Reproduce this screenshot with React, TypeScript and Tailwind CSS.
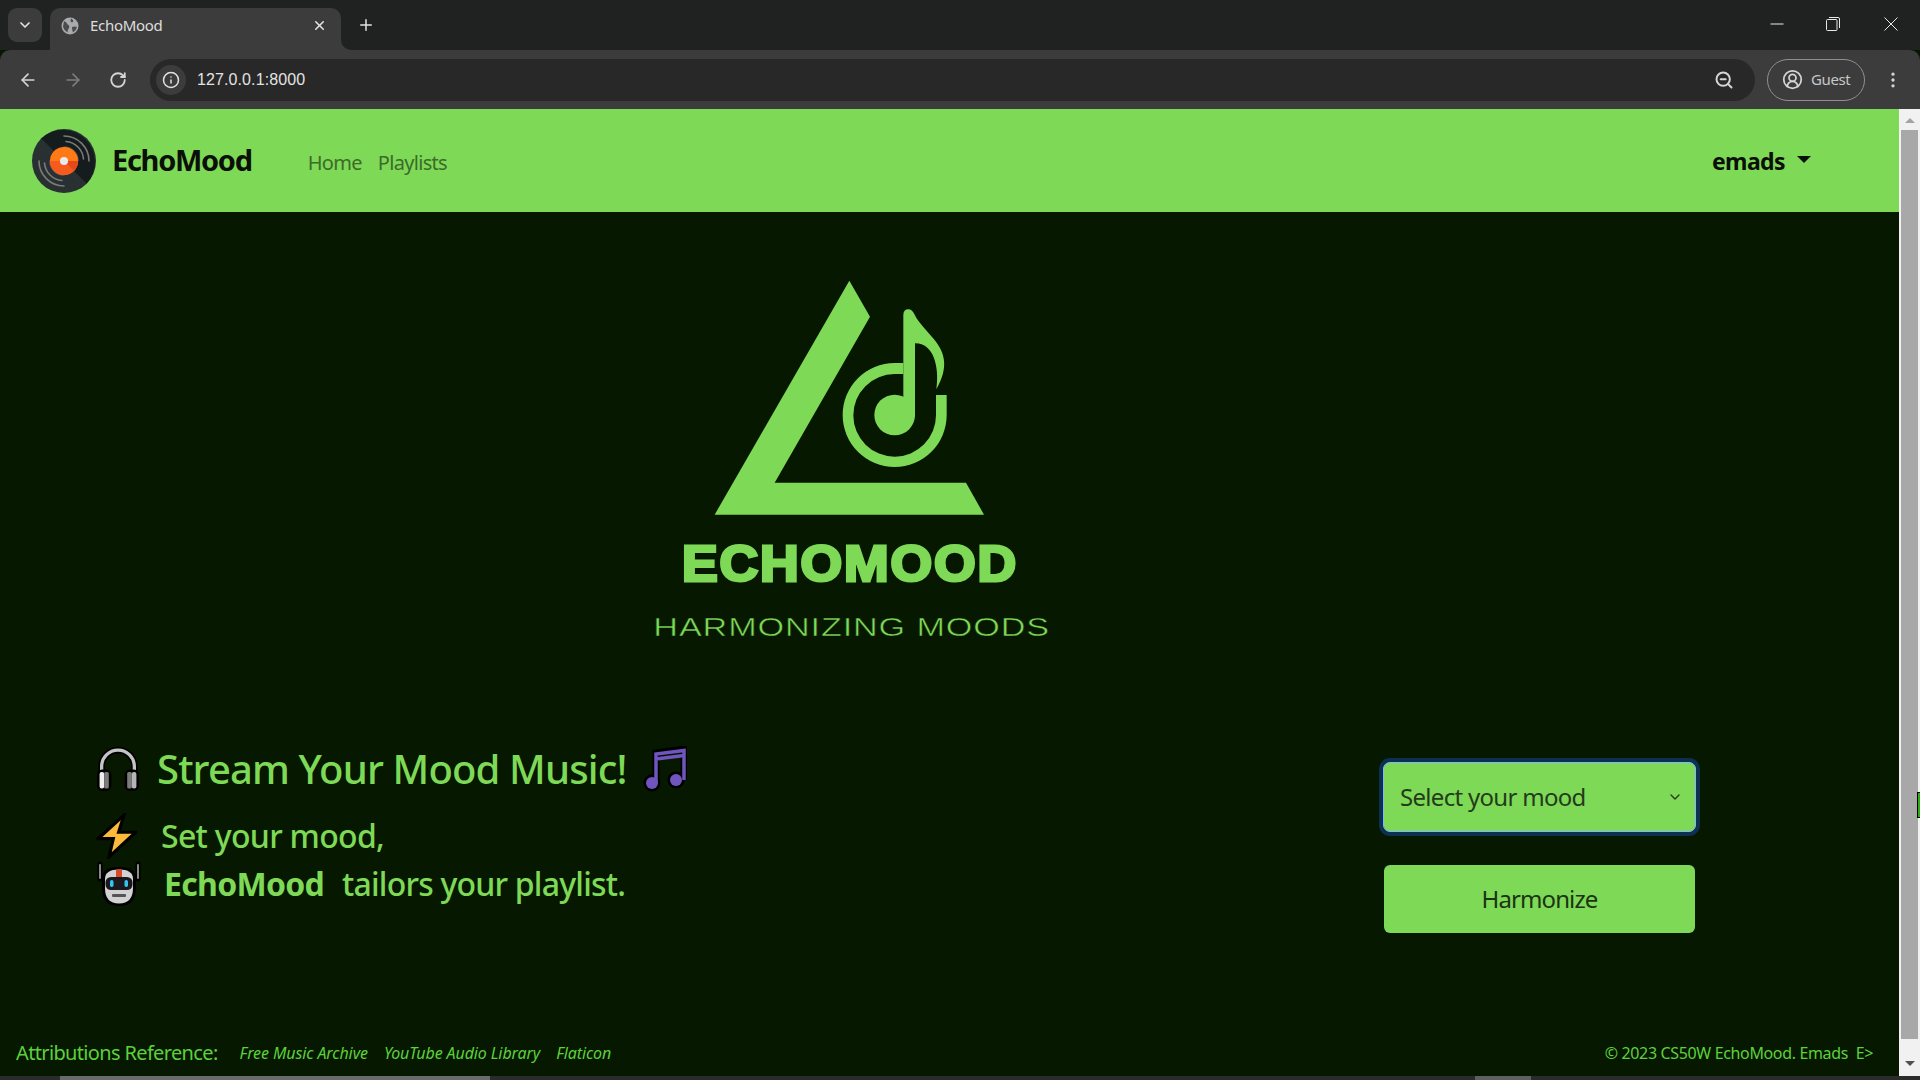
import React from "react";
import { ArrowLeft, ArrowRight, RotateCw, Info, Plus, X, ChevronDown, ZoomOut, CircleUserRound, EllipsisVertical } from "lucide-react";

function Disc() {
  return (
    <svg viewBox="0 0 64 64" className="w-16 h-16 shrink-0">
      <circle cx="32" cy="32" r="32" fill="#283032" />
      <path d="M9.4 9.4A32 32 0 0 1 54.6 54.6Z" fill="#141c1e" />
      <g fill="none" stroke="#7d7a78" strokeWidth="1.6" strokeLinecap="round">
        <path d="M32 7A25 25 0 0 1 57 32" />
        <path d="M34 12.5A19 19 0 0 1 51.5 30" />
        <path d="M32 18A14 14 0 0 1 46 32" opacity="0.6" />
        <path d="M7 32A25 25 0 0 0 32 57" />
        <path d="M12.5 34A19 19 0 0 0 30 51.5" />
        <path d="M18 32A14 14 0 0 0 32 46" opacity="0.6" />
      </g>
      <circle cx="32" cy="32" r="14" fill="#ff7a14" />
      <path d="M18 32A14 14 0 0 0 46 32Z" fill="#f65a1c" />
      <path d="M32 32L46 32A14 14 0 0 1 42 42Z" fill="#e5481a" />
      <circle cx="32" cy="32" r="4" fill="#e6e9ee" />
    </svg>
  );
}

function Logo() {
  return (
    <svg viewBox="0 0 1320 1200" className="w-[440px] h-[400px] block">
      <path d="M628 62L690 170L404 668L978 668L1032 764L224 764Z" fill="#7ed957" />
      <path d="M920 405L920 465A156 156 0 1 1 764 309L790 309L790 342L764 342A124 124 0 1 0 888 465L888 405Z" fill="#7ed957" />
      <circle cx="764" cy="465" r="61" fill="#7ed957" />
      <path d="M790 165Q790 148 805 148Q816 148 824 164C838 192 862 212 882 238C918 282 925 325 889 388C897 340 890 250 825 250L825 470L790 470Z" fill="#7ed957" />
      <text x="126" y="964" fontFamily="'Liberation Sans', sans-serif" fontWeight="700" fontSize="148" letterSpacing="5" textLength="1008" lengthAdjust="spacingAndGlyphs" fill="#7ed957" stroke="#7ed957" strokeWidth="9">ECHOMOOD</text>
      <text x="40" y="1128" fontFamily="'Liberation Sans', sans-serif" fontSize="78" letterSpacing="2" textLength="1190" lengthAdjust="spacingAndGlyphs" fill="#7ed957" stroke="#071800" strokeWidth="1.5">HARMONIZING MOODS</text>
    </svg>
  );
}

function Headphones() {
  return (
    <svg viewBox="1 1 42 45" className="w-[44px] h-[46px] shrink-0">
      <path d="M6 31V21A16 16 0 0 1 38 21V31" fill="none" stroke="#000" strokeWidth="6.5" />
      <path d="M6 31V21A16 16 0 0 1 38 21V31" fill="none" stroke="#c4c4c4" strokeWidth="3.2" />
      <rect x="1.5" y="24" width="14" height="21" rx="5" fill="#000" />
      <rect x="28.5" y="24" width="14" height="21" rx="5" fill="#000" />
      <rect x="4" y="26.5" width="4.5" height="16" rx="2" fill="#efefef" />
      <rect x="8.5" y="26.5" width="4.5" height="16" rx="1.5" fill="#7c7c7c" />
      <rect x="31" y="26.5" width="4.5" height="16" rx="1.5" fill="#7c7c7c" />
      <rect x="35.5" y="26.5" width="4.5" height="16" rx="2" fill="#b5b5b5" />
    </svg>
  );
}

function Note() {
  return (
    <svg viewBox="0 0 44 46" className="w-[44px] h-[46px] shrink-0">
      <path d="M13 37V7L41 3V34" fill="none" stroke="#000" strokeWidth="7" />
      <circle cx="9" cy="37" r="8.5" fill="#000" />
      <circle cx="33" cy="34" r="8.5" fill="#000" />
      <path d="M13 37V8L41 4.5V34M13 13L41 9.5" fill="none" stroke="#6f55bd" strokeWidth="3.5" />
      <circle cx="9" cy="37" r="6" fill="#6f55bd" />
      <circle cx="33" cy="34" r="6" fill="#6f55bd" />
    </svg>
  );
}

function Bolt() {
  return (
    <svg viewBox="1 2 38 43" className="w-[41px] h-[46px] shrink-0">
      <path d="M27 4L3 26L17 26L13 43L38 20L22 20Z" fill="#fcb93a" stroke="#000" strokeWidth="3" strokeLinejoin="miter" />
    </svg>
  );
}

function Robot() {
  return (
    <svg viewBox="0 0 44 46" className="w-[46px] h-[46px] shrink-0">
      <path d="M3 3V18M41 3V18" stroke="#000" strokeWidth="5" strokeLinecap="round" />
      <path d="M3 4V17M41 4V17" stroke="#8a8a8a" strokeWidth="2" strokeLinecap="round" />
      <path d="M5 17Q5 6 22 6Q39 6 39 17V27Q39 45 22 45Q5 45 5 27Z" fill="#000" />
      <path d="M8 18Q8 8.5 22 8.5Q36 8.5 36 18V27Q36 42.5 22 42.5Q8 42.5 8 27Z" fill="#d2d2d2" />
      <rect x="19" y="8.5" width="6" height="8" fill="#d94a2b" />
      <rect x="8.5" y="16" width="27" height="13" rx="5.5" fill="#1a1a1e" />
      <rect x="13" y="19" width="3.5" height="7" rx="1.7" fill="#35c3f2" />
      <rect x="27.5" y="19" width="3.5" height="7" rx="1.7" fill="#35c3f2" />
      <rect x="15" y="33" width="14" height="3" rx="1" fill="#555" />
    </svg>
  );
}

export default function App() {
  return (
    <div className="w-[1920px] h-[1080px] overflow-hidden flex flex-col bg-[#071800] font-['Noto_Sans',sans-serif]">
      {/* tab strip */}
      <div className="h-[50px] bg-[#202221] flex items-start shrink-0 pl-2 pt-2 text-[#e3e3e3]">
        <div className="w-[34px] h-[34px] rounded-[9px] bg-[#3c3c3c] flex items-center justify-center">
          <ChevronDown size={16} strokeWidth={2.5} />
        </div>
        <div className="relative ml-[8px] w-[291px] h-[42px] rounded-t-[10px] bg-[#3c3c3c] flex items-center pl-[11px] pr-[14px] pb-[7px]">
          <svg viewBox="0 0 18 18" className="w-[18px] h-[18px] shrink-0">
            <circle cx="9" cy="9" r="8.5" fill="#a8abae" />
            <path d="M3 4Q6 5 6.5 7.5Q9 8.5 8 11Q6.5 12.5 6.5 15.5Q3 13.5 2 10ZM10 1.5Q13 3 12 5Q10 6 9.5 4ZM11 10Q14 9 16 10Q15 14 12 15.5Q11 13 11 10Z" fill="#4a4c4e" />
          </svg>
          <span className="ml-[11px] text-[15px] tracking-[-0.3px] text-[#dedede] flex-1">EchoMood</span>
          <X size={15} strokeWidth={2.5} />
          <div className="absolute left-full bottom-0 w-[10px] h-[10px] bg-[#3c3c3c]">
            <div className="w-full h-full bg-[#202221] rounded-bl-[10px]" />
          </div>
        </div>
        <Plus size={18} strokeWidth={2} className="ml-[16px] mt-[8px]" />
        <div className="ml-auto flex items-center pt-[9px] pr-[22px] text-[#e8e8e8]">
          <svg viewBox="0 0 14 14" className="w-[14px] h-[14px]"><path d="M0.5 7H13.5" stroke="#e8e8e8" strokeWidth="1" /></svg>
          <svg viewBox="0 0 14 14" className="ml-[42px] w-[14px] h-[14px]" fill="none" stroke="#e8e8e8" strokeWidth="1">
            <rect x="0.5" y="2.5" width="10.5" height="11" rx="1" />
            <path d="M3 0.5H12Q13.5 0.5 13.5 2V11" />
          </svg>
          <svg viewBox="0 0 14 14" className="ml-[44px] w-[14px] h-[14px]" fill="none" stroke="#e8e8e8" strokeWidth="1"><path d="M0.5 0.5L13.5 13.5M13.5 0.5L0.5 13.5" /></svg>
        </div>
      </div>
      {/* toolbar */}
      <div className="h-[59px] bg-[#3c3c3c] rounded-t-[10px] flex items-center shrink-0 text-[#d5d5d5]">
        <ArrowLeft size={20} className="ml-[18px]" />
        <ArrowRight size={20} className="ml-[25px] text-[#7e7e7e]" />
        <RotateCw size={18} strokeWidth={2.4} className="ml-[26px]" />
        <div className="ml-[23px] w-[1605px] h-[42px] rounded-full bg-[#282828] flex items-center pl-[6px] pr-[21px]">
          <div className="w-[30px] h-[30px] rounded-full bg-[#3c3c3c] flex items-center justify-center">
            <Info size={18} strokeWidth={2} className="text-[#e3e3e3]" />
          </div>
          <span className="ml-[11px] text-[16px] tracking-[0.1px] text-[#e3e3e3] font-['Liberation_Sans',sans-serif] flex-1">127.0.0.1:8000</span>
          <ZoomOut size={20} strokeWidth={2.4} />
        </div>
        <div className="ml-[12px] w-[98px] h-[42px] rounded-full border border-[#8f8f8f] flex items-center pl-[14px]">
          <CircleUserRound size={21} />
          <span className="ml-[8px] text-[15px] tracking-[-0.4px] text-[#c7c7c7]">Guest</span>
        </div>
        <EllipsisVertical size={20} className="ml-[18px]" />
      </div>
      {/* page + scrollbar */}
      <div className="flex-1 flex min-h-0">
        <div className="flex-1 min-w-0 flex flex-col">
          <nav className="h-[103px] bg-[#7ed957] flex items-center pl-[32px] pr-[88px] shrink-0">
            <Disc />
            <span className="ml-[16px] mb-[2px] text-[29px] font-bold text-[#0a0f08] tracking-[-1.3px]">EchoMood</span>
            <a className="ml-[56px] mt-[5px] text-[20px] text-[#3c6b2a] tracking-[-0.7px]">Home</a>
            <a className="ml-[16px] mt-[5px] text-[20px] text-[#3c6b2a] tracking-[-0.7px]">Playlists</a>
            <span className="ml-auto mt-[2px] text-[23px] font-bold text-[#0a0f08] tracking-[-0.6px]">emads</span>
            <span className="ml-[12px] mb-[3px] w-0 h-0 border-x-[7px] border-x-transparent border-t-[7px] border-t-[#0a0f08]" />
          </nav>
          <main className="flex-1 flex flex-col text-[#7ed957]">
            <div className="pl-[640px] pt-[48px]"><Logo /></div>
            <div className="flex mt-[82px] pl-[96px] h-[200px]">
              <div className="flex-1 flex flex-col">
                <div className="flex items-center h-[52px] mt-[1px]">
                  <Headphones />
                  <span className="ml-[17px] text-[40px] font-medium leading-none tracking-[-0.85px]">Stream Your Mood Music!</span>
                  <span className="ml-[16px]"><Note /></span>
                </div>
                <div className="flex items-center h-[46px] mt-[18px]">
                  <Bolt />
                  <span className="ml-[24px] text-[32px] font-medium leading-none tracking-[-0.7px]">Set your mood,</span>
                </div>
                <div className="flex items-center h-[46px] mt-[2px]">
                  <Robot />
                  <span className="ml-[22px] text-[32px] font-bold leading-none tracking-[-0.7px]">EchoMood</span>
                  <span className="ml-[18px] text-[32px] font-medium leading-none tracking-[-0.8px]">tailors your playlist.</span>
                </div>
              </div>
              <div className="w-[313px] mr-[203px] pt-[20px] flex flex-col">
                <div className="h-[70px] rounded-[7px] bg-[#7ed957] border border-[#86b7fe] ring-4 ring-[#0c3150] flex items-center pl-[16px] pr-[12px] text-[#243b1a]">
                  <span className="text-[24px] flex-1 tracking-[-0.7px]">Select your mood</span>
                  <ChevronDown size={16} />
                </div>
                <button className="mt-[33px] mx-[1px] h-[68px] rounded-[6px] bg-[#7ed957] text-[24px] text-[#1c3314] tracking-[-0.9px]">Harmonize</button>
              </div>
            </div>
            <footer className="mt-auto h-[48px] flex items-center pl-[16px] pr-[26px] pt-[1px] text-[#5cd13c]">
              <span className="text-[20px] tracking-[-0.65px]">Attributions Reference:</span>
              <i className="ml-[22px] text-[16px] tracking-[-0.1px]">Free Music Archive</i>
              <i className="ml-[16px] text-[16px] tracking-[-0.1px]">YouTube Audio Library</i>
              <i className="ml-[16px] text-[16px] tracking-[-0.1px]">Flaticon</i>
              <span className="ml-auto text-[16px] tracking-[-0.35px]">© 2023 CS50W EchoMood. Emads&nbsp; E&gt;</span>
            </footer>
          </main>
        </div>
        <div className="relative w-[21px] bg-[#f1f1f1] flex flex-col items-center shrink-0 pt-[9px] pb-[10px]">
          <span className="w-0 h-0 border-x-[5px] border-x-transparent border-b-[5px] border-b-[#a3a3a3]" />
          <div className="w-[17px] flex-1 bg-[#a8a8a8] mt-[7px] mb-[22px]" />
          <span className="w-0 h-0 border-x-[5px] border-x-transparent border-t-[5px] border-t-[#505050]" />
          <div className="absolute right-0 top-[683px] w-[3px] h-[26px] bg-[#2fae12] border-l border-y border-black" />
        </div>
      </div>
      <div className="h-[4px] shrink-0 bg-[#2b2b2b] flex">
        <div className="ml-[60px] w-[430px] bg-[#6a6a6a]" />
        <div className="ml-[985px] w-[56px] bg-[#5f5f5f]" />
      </div>
    </div>
  );
}
